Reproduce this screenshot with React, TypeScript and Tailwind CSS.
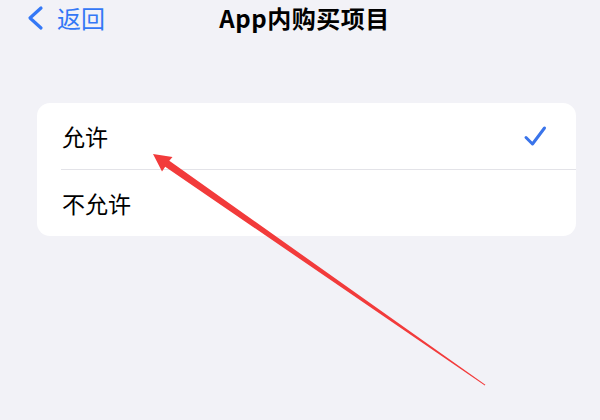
import React from 'react';

const options = [
  { label: '允许', checked: true },
  { label: '不允许', checked: false },
];

function BackChevron() {
  return (
    <svg width="22" height="28" viewBox="0 0 22 28" fill="none">
      <path d="M17 4 L6 14 L17 24" stroke="#3478f6" strokeWidth="3.2" strokeLinecap="round" strokeLinejoin="round" />
    </svg>
  );
}

function Check() {
  return (
    <svg width="24" height="22" viewBox="0 0 24 22" fill="none">
      <path d="M3 12.5 L9.5 19 L21.5 3" stroke="#3a74ea" strokeWidth="3" strokeLinecap="round" strokeLinejoin="round" />
    </svg>
  );
}

// red annotation arrow drawn over the screenshot
function Arrow() {
  return (
    <svg className="absolute inset-0 pointer-events-none" width="600" height="420" viewBox="0 0 600 420">
      <polygon
        points="153,154 172.5,157 169.3,160.8 485.4,384.7 484.8,385.5 165.2,166.8 162,171.5"
        fill="#f23b3b"
      />
    </svg>
  );
}

export default function App() {
  return (
    <div className="relative w-[600px] h-[420px] overflow-hidden bg-[#f2f2f7] font-['Noto_Sans_CJK_SC','Noto_Sans',sans-serif]">
      {/* Nav bar */}
      <div className="grid grid-cols-[1fr_auto_1fr] items-center h-[36px]">
        <div className="flex items-center pl-[24px]">
          <BackChevron />
          <span className="ml-[11px] text-[24px] leading-none text-[#3478f6]">返回</span>
        </div>
        <h1 className="pl-[9px] text-[24px] leading-none font-bold tracking-[0.5px] text-black">App内购买项目</h1>
        <div />
      </div>

      {/* Options card */}
      <div className="mt-[67px] ml-[37px] w-[539px] bg-white rounded-[13px] overflow-hidden">
        {options.map((opt, i) => (
          <div key={opt.label}>
            {i > 0 && <div className="ml-[24px] h-px bg-[#e3e3e8]" />}
            <div className="flex items-center justify-between h-[66px] pl-[25px] pr-[29px]">
              <span className="text-[23px] leading-none text-black">{opt.label}</span>
              {opt.checked && <Check />}
            </div>
          </div>
        ))}
      </div>

      <Arrow />
    </div>
  );
}
